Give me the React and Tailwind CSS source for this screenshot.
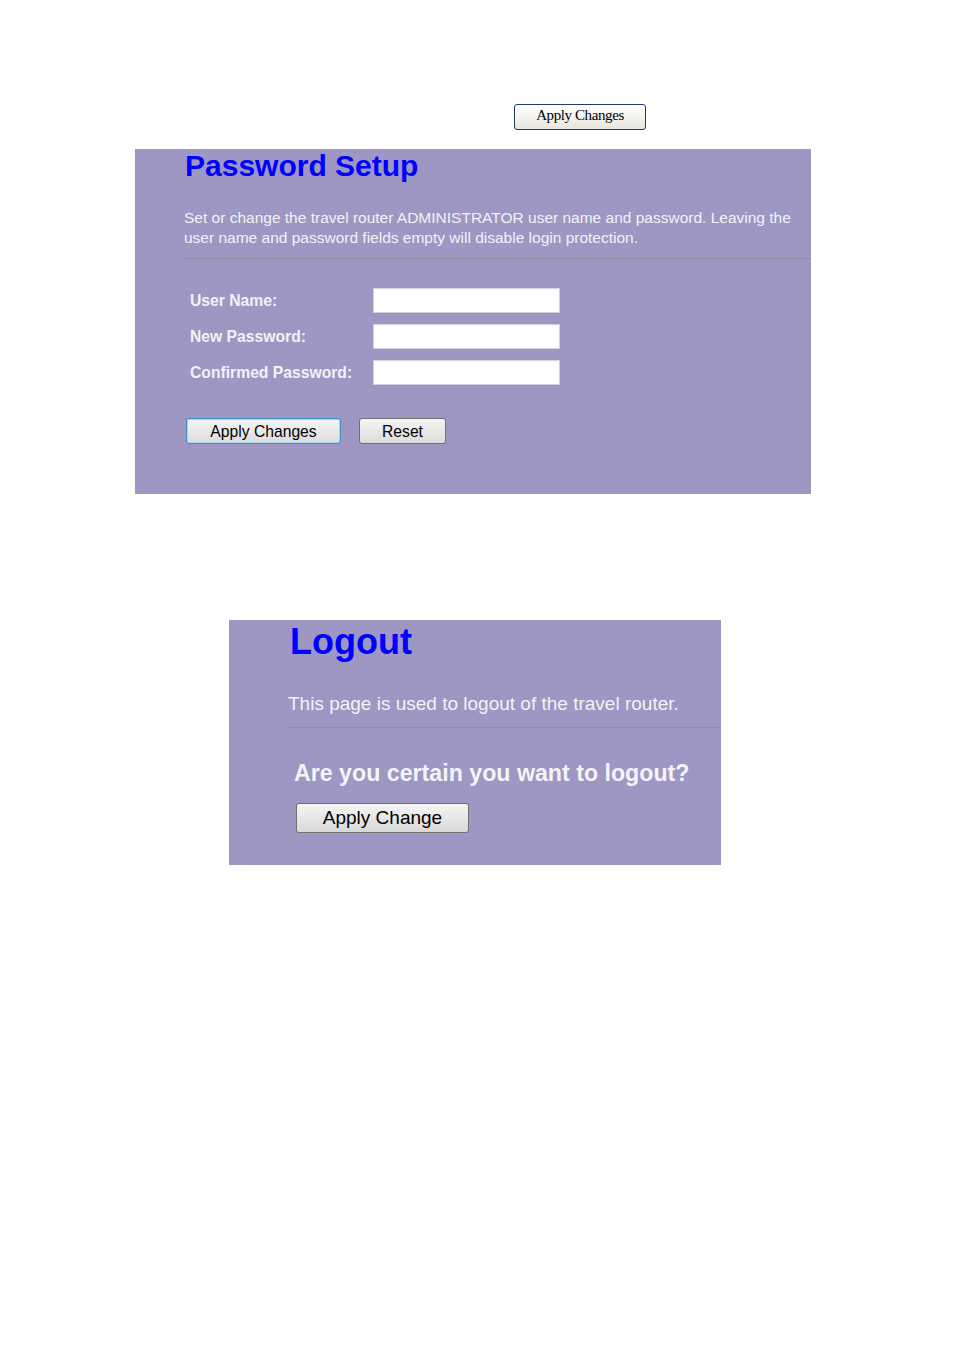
export default function App() {
  const arial = { fontFamily: '"Liberation Sans", Arial, sans-serif' };
  return (
    <div className="w-[954px] h-[1350px] bg-white" style={arial}>
      <div className="pt-[104px] pl-[514px]">
        <button
          className="w-[132px] h-[26px] pb-[4px] rounded-[3px] border border-[#1f3c6c] bg-gradient-to-b from-white to-[#e8e6dc] text-[15px] text-black tracking-[-0.4px] flex items-center justify-center"
          style={{ fontFamily: '"Liberation Serif", "Times New Roman", serif' }}
        >
          Apply Changes
        </button>
      </div>

      <div className="mt-[19px] ml-[135px] w-[676px] h-[345px] bg-[#9e96c3]">
        <h1 className="pl-[50px] text-[30px] leading-[34px] font-bold text-[#0000ff]">Password Setup</h1>
        <p className="mt-[25px] ml-[49px] text-[15.5px] leading-[20px] text-[#f2f2f6]">
          Set or change the travel router ADMINISTRATOR user name and password. Leaving the<br />
          user name and password fields empty will disable login protection.
        </p>
        <div className="mt-[10px] ml-[49px] h-px bg-[#8f8aa6]" />
        <div className="mt-[23px] ml-[55px] flex flex-col">
          {["User Name:", "New Password:", "Confirmed Password:"].map((l) => (
            <div key={l} className="h-[36px] flex items-center">
              <span className="w-[183px] pt-[2px] text-[15.7px] font-bold text-[#f2f2f6]">{l}</span>
              <div className="w-[187px] h-[25px] bg-white border border-[#d4d0e4]" />
            </div>
          ))}
        </div>
        <div className="mt-[28px] ml-[51px] flex gap-[18px]">
          <button className="w-[155px] h-[26px] pt-[2px] rounded-[3px] border border-[#3d8fc6] shadow-[0_0_0_1px_#a9d6f0_inset] bg-gradient-to-b from-[#f5f5f5] to-[#dcdcdc] text-[15.7px] text-black flex items-center justify-center">
            Apply Changes
          </button>
          <button className="w-[87px] h-[26px] pt-[2px] rounded-[3px] border border-[#707070] bg-gradient-to-b from-[#f5f5f5] to-[#dcdcdc] text-[15.7px] text-black flex items-center justify-center">
            Reset
          </button>
        </div>
      </div>

      <div className="mt-[126px] ml-[229px] w-[492px] h-[245px] bg-[#9e96c3]">
        <h1 className="pl-[61px] text-[36px] leading-[41px] font-bold text-[#0000ff] pt-[1px]">Logout</h1>
        <p className="mt-[31px] ml-[59px] text-[19px] leading-[22px] text-[#f2f2f6]">
          This page is used to logout of the travel router.
        </p>
        <div className="mt-[12px] ml-[59px] h-px bg-[#8f8aa6]" />
        <p className="mt-[32px] ml-[65px] text-[23.2px] leading-[26px] font-bold text-[#f4f4f8]">
          Are you certain you want to logout?
        </p>
        <div className="mt-[17px] ml-[67px]">
          <button className="w-[173px] h-[30px] rounded-[3px] border border-[#707070] bg-gradient-to-b from-[#f5f5f5] to-[#d8d8d8] text-[19px] text-black flex items-center justify-center">
            Apply Change
          </button>
        </div>
      </div>
    </div>
  );
}
